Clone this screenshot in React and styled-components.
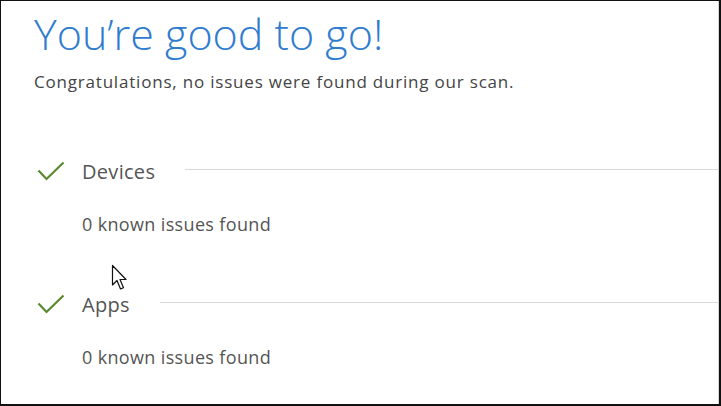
import styled, { createGlobalStyle } from "styled-components";

const Global = createGlobalStyle`
  html, body {
    margin: 0;
    padding: 0;
    background: #fff;
  }
  body {
    font-family: "Open Sans", "Liberation Sans", sans-serif;
  }
`;

const Frame = styled.div`
  position: relative;
  box-sizing: border-box;
  width: 721px;
  height: 406px;
  border: 1px solid #111;
  border-right-width: 2px;
  border-bottom-width: 2px;
  overflow: hidden;
  background: #fff;
`;

const Inner = styled.div`
  box-sizing: border-box;
  height: 100%;
  border-right: 1px solid #d6d6d6;
  padding: 4px 0 0 33px;
`;

const Title = styled.h1`
  margin: 0;
  font-weight: 300;
  font-size: 43px;
  line-height: 58px;
  color: #2f7ccf;
`;

const Subtitle = styled.p`
  margin: 8px 0 0 0;
  font-size: 17px;
  line-height: 22px;
  letter-spacing: 0.8px;
  color: #444;
`;

const Section = styled.section`
  margin-top: ${(p) => p.$top}px;
`;

const SectionHead = styled.div`
  display: flex;
  align-items: center;
  gap: 17px;
  height: 30px;
`;

const Check = styled.svg`
  width: 28px;
  height: 20px;
  margin-left: 3px;
  flex: none;
`;

const Name = styled.span`
  font-size: 20px;
  letter-spacing: 0.3px;
  color: #555;
  flex: none;
`;

const Rule = styled.div`
  flex: 1;
  height: 1px;
  background: #d9d9d9;
  margin-left: 13px;
  margin-top: -3px;
`;

const Note = styled.div`
  margin: 26px 0 0 48px;
  font-size: 18px;
  line-height: 24px;
  letter-spacing: 0.35px;
  color: #555;
`;

const Cursor = styled.svg`
  position: absolute;
  left: 110px;
  top: 263px;
  width: 18px;
  height: 28px;
`;

const sections = [
  { name: "Devices", top: 63 },
  { name: "Apps", top: 53 },
];

export default function App() {
  return (
    <>
      <Global />
      <Frame>
        <Inner>
          <Title>You’re good to go!</Title>
          <Subtitle>Congratulations, no issues were found during our scan.</Subtitle>
          {sections.map((s) => (
            <Section key={s.name} $top={s.top}>
              <SectionHead>
                <Check viewBox="0 0 28 20">
                  <path d="M1.5 9.5 L9.5 18 L26.5 1.5" fill="none" stroke="#5a8a2e" strokeWidth="2.2" />
                </Check>
                <Name>{s.name}</Name>
                <Rule />
              </SectionHead>
              <Note>0 known issues found</Note>
            </Section>
          ))}
        </Inner>
        <Cursor viewBox="0 0 18 28">
          <path
            d="M1.5 1.5 L1.5 21 L6 16.5 L9.5 25 L12.5 23.8 L9 15.5 L15 15.5 Z"
            fill="#fff"
            stroke="#111"
            strokeWidth="1.2"
            strokeLinejoin="round"
          />
        </Cursor>
      </Frame>
    </>
  );
}
